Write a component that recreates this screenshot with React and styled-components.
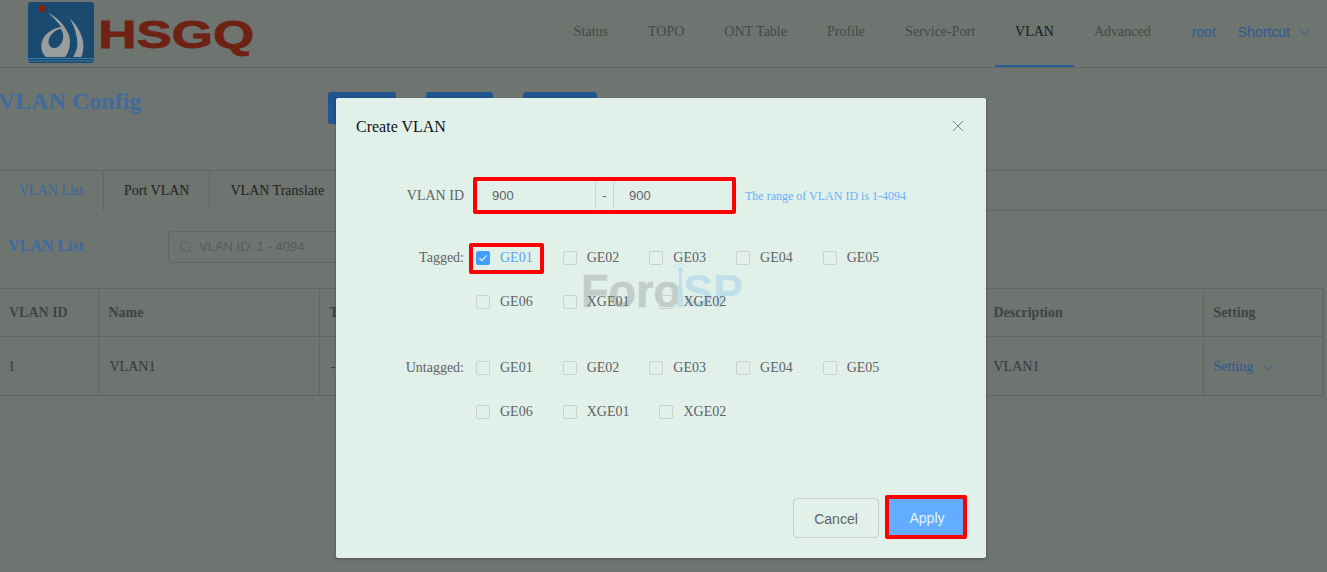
import React from "react";
import styled, { createGlobalStyle } from "styled-components";

const serif = `"Liberation Serif", "Times New Roman", serif`;
const sans = `"Liberation Sans", Arial, sans-serif`;
const line = "#5f6664";

const Global = createGlobalStyle`
  html, body { margin: 0; padding: 0; background: #6e7470; }
  body { font-family: ${serif}; font-size: 14px; overflow: hidden; }
  #root { width: 1327px; height: 572px; overflow: hidden; position: relative; }
`;

const Page = styled.div`
  width: 1327px;
  height: 572px;
  background: #6e7470;
  color: #464a4a;
`;

const Header = styled.header`
  display: flex;
  height: 67px;
  border-bottom: 1px solid ${line};
`;

const LogoWrap = styled.div`
  width: 260px;
  padding: 2px 0 0 28px;
  flex: none;
`;

const Nav = styled.nav`
  display: flex;
  margin-left: auto;
  height: 67px;
`;

const NavItem = styled.a`
  display: flex;
  align-items: center;
  height: 63px;
  padding: 0 20px 2px;
  color: ${(p) => (p.$active ? "#18191a" : "#444948")};
  border-bottom: 2px solid ${(p) => (p.$active ? "#2a5c99" : "transparent")};
`;

const UserMenu = styled.div`
  display: flex;
  align-items: center;
  font-family: ${sans};
  color: #2b5b97;
  height: 64px;
  margin-left: 21px;
  padding-right: 16px;
`;

const Shortcut = styled.span`
  display: flex;
  align-items: center;
  margin-left: 22px;
  gap: 9px;
`;

const TitleRow = styled.div`
  display: flex;
  height: 102px;
  align-items: flex-start;
`;

const Title = styled.h1`
  width: 328px;
  margin: 19px 0 0 -2px;
  padding: 0;
  font-size: 24px;
  line-height: 28px;
  font-weight: 700;
  color: #3f6b9e;
`;

const ActionBar = styled.div`
  display: flex;
  margin: 24px 0 0 2px;
`;

const Action = styled.div`
  width: ${(p) => p.$w}px;
  margin-right: ${(p) => p.$gap}px;
  height: 32px;
  border-radius: 3px;
  background: #20558f;
`;

const Tabs = styled.div`
  display: flex;
  height: 41px;
  box-sizing: border-box;
  border-top: 1px solid ${line};
  border-bottom: 1px solid ${line};
`;

const Tab = styled.div`
  display: flex;
  flex: none;
  align-items: center;
  height: 40px;
  box-sizing: border-box;
  padding: 0 20px;
  white-space: nowrap;
  border-right: 1px solid ${line};
  color: #1d1f1f;
  background: #6e7470;
`;

const ActiveTab = styled(Tab)`
  width: 104px;
  padding: 0 0 0 19px;
  color: #35669f;
`;

const ListBar = styled.div`
  display: flex;
  align-items: center;
  height: 77px;
  padding: 0 0 8px 8px;
  box-sizing: border-box;
`;

const ListTitle = styled.h2`
  width: 160px;
  margin: 0;
  font-size: 16px;
  font-weight: 700;
  color: #3a6ba3;
`;

const Search = styled.div`
  display: flex;
  align-items: center;
  width: 300px;
  height: 32px;
  box-sizing: border-box;
  padding-left: 10px;
  margin-top: 2px;
  border: 1px solid ${line};
  border-radius: 4px;
  gap: 6px;
  font-family: ${sans};
  font-size: 13px;
  color: #565c5b;
`;

const Table = styled.table`
  table-layout: fixed;
  width: 1323px;
  border-collapse: collapse;
`;

const Th = styled.th`
  height: 47px;
  padding: 0 10px;
  text-align: left;
  font-weight: 700;
  color: #3f4343;
  border: 1px solid ${line};
  &:first-child { border-left: none; padding-left: 9px; }
  &:nth-child(5) { padding-left: 11px; }
`;

const Td = styled.td`
  height: 59px;
  padding: 2px 10px 0 11px;
  box-sizing: border-box;
  color: #363938;
  border: 1px solid ${line};
  &:first-child { border-left: none; padding-left: 8px; }
  &:last-child { padding-left: 10px; }
`;

const SettingLink = styled.span`
  display: inline-flex;
  align-items: center;
  gap: 10px;
  color: #2b5b97;
`;

const Modal = styled.section`
  position: absolute;
  left: 336px;
  top: 98px;
  width: 650px;
  height: 460px;
  display: flex;
  flex-direction: column;
  background: #e1f0e9;
  border-radius: 2px;
  box-shadow: 0 1px 3px rgba(0, 0, 0, 0.3);
`;

const ModalHead = styled.div`
  display: flex;
  align-items: center;
  justify-content: space-between;
  height: 56px;
  box-sizing: border-box;
  padding: 2px 22px 0 20px;
  font-size: 16px;
  color: #111;
`;

const Close = styled.span`
  display: flex;
  margin-top: -2px;
  color: #7d8582;
`;

const ModalBody = styled.div`
  position: relative;
  padding: 23px 20px 0;
  flex: 1;
`;

const Row = styled.div`
  position: relative;
  display: flex;
  align-items: ${(p) => (p.$top ? "flex-start" : "center")};
  margin-bottom: ${(p) => p.$mb || 0}px;
`;

const FieldLabel = styled.label`
  width: 108px;
  flex: none;
  text-align: right;
  color: #606266;
  line-height: ${(p) => (p.$tall ? "44px" : "normal")};
`;

const RangeBox = styled.div`
  display: flex;
  align-items: stretch;
  width: 263px;
  height: 37px;
  box-sizing: border-box;
  margin-left: 9px;
  border: 4px solid #fe0000;
  border-radius: 2px;
  font-family: ${sans};
  font-size: 13px;
  color: #606266;
`;

const RangeInput = styled.div`
  flex: 1;
  display: flex;
  align-items: center;
  padding-left: 15px;
  border-style: solid;
  border-color: #ccd4d0;
  border-width: 0 ${(p) => (p.$second ? "0 0 1px" : "1px 0 0")};
  border-radius: 3px;
`;

const RangeSep = styled.span`
  width: 17px;
  flex: none;
  text-align: center;
  line-height: 29px;
`;

const Hint = styled.span`
  margin: 2px 0 0 9px;
  font-size: 12px;
  color: #66b1ff;
`;

const Ports = styled.div`
  display: flex;
  flex-wrap: wrap;
  width: 470px;
  margin-left: 12px;
`;

const Port = styled.label`
  position: relative;
  display: flex;
  align-items: center;
  height: 44px;
  margin-right: 30px;
  gap: 10px;
  color: ${(p) => (p.$checked ? "#56a6f7" : "#606266")};
  ${(p) =>
    p.$checked &&
    `&::after {
      content: "";
      position: absolute;
      left: -7px;
      right: -11px;
      top: 7px;
      bottom: 6px;
      border: 4px solid #fe0000;
      border-radius: 2px;
    }`}
`;

const Box = styled.span`
  display: flex;
  align-items: center;
  justify-content: center;
  width: 14px;
  height: 14px;
  box-sizing: border-box;
  border: 1px solid ${(p) => (p.$checked ? "#409eff" : "#c9d0cd")};
  border-radius: 2px;
  background: ${(p) => (p.$checked ? "#409eff" : "transparent")};
`;

const Watermark = styled.svg`
  position: absolute;
  left: 239px;
  top: 108px;
  pointer-events: none;
`;

const Footer = styled.div`
  display: flex;
  justify-content: flex-end;
  align-items: flex-start;
  gap: 6px;
  padding: 0 19px 19px 0;
  font-family: ${sans};
  font-size: 14px;
`;

const Cancel = styled.div`
  display: flex;
  align-items: center;
  justify-content: center;
  width: 86px;
  height: 40px;
  margin-top: 3px;
  padding-top: 1px;
  box-sizing: border-box;
  border: 1px solid #c8cfcb;
  border-radius: 4px;
  color: #606266;
`;

const Apply = styled.div`
  display: flex;
  align-items: center;
  justify-content: center;
  width: 82px;
  height: 44px;
  padding: 1px 0 0 2px;
  box-sizing: border-box;
  border: 4px solid #fe0000;
  border-radius: 2px;
  background: #62adff;
  color: #e4f1fb;
`;

const Logo = () => (
  <svg width="232" height="62" viewBox="0 0 232 62">
    <rect x="0" y="0" width="66" height="61" rx="3" fill="#1a4a70" />
    <circle cx="14" cy="6.5" r="3.7" fill="#7a2418" />
    <path
      fillRule="evenodd"
      fill="#9a9e9e"
      d="M20 10.7 C29 15 37 23 41 33 C43 41 42 49 37 55 L18 55 C13 51 12 43 15 37 C18 31 25 26 33 25 C30 20 25 15 20 10.7 Z M33 27 C26 28 20.5 34 20.5 40 C21 45.5 26 47.5 30 45 C35.5 41 37 33 33 27 Z"
    />
    <path fill="#9a9e9e" d="M41.7 16.3 C48 22 53 30 55 39 C56 45 55 51 53.3 55 L45 55 C48 50 50 45 49.3 40 C48.8 32 45.5 23 41.7 16.3 Z" />
    <path d="M0 56.5 H66 M0 59 H66" stroke="#3d7aa5" strokeWidth="1" />
    <text
      x="70.2"
      y="46"
      textLength="156"
      lengthAdjust="spacingAndGlyphs"
      fontFamily={sans}
      fontWeight="700"
      fontSize="38"
      fill="#6e2214"
      stroke="#6e2214"
      strokeWidth="0.8"
    >
      HSGQ
    </text>
  </svg>
);

const Chevron = ({ size = 12 }) => (
  <svg width={size} height={size} viewBox="0 0 12 12" fill="none" stroke="currentColor" strokeWidth="1">
    <path d="M1 3.5 L6 8.5 L11 3.5" />
  </svg>
);

const Check = () => (
  <svg width="10" height="10" viewBox="0 0 10 10" fill="none" stroke="#e6f2fb" strokeWidth="1.2">
    <path d="M1.5 5.2 L4 7.6 L8.6 2.4" />
  </svg>
);

const PortCheck = ({ name, checked }) => (
  <Port $checked={checked}>
    <Box $checked={checked}>{checked && <Check />}</Box>
    {name}
  </Port>
);

const ports = ["GE01", "GE02", "GE03", "GE04", "GE05", "GE06", "XGE01", "XGE02"];
const nav = ["Status", "TOPO", "ONT Table", "Profile", "Service-Port", "VLAN", "Advanced"];

export default function App() {
  return (
    <Page>
      <Global />
      <Header>
        <LogoWrap>
          <Logo />
        </LogoWrap>
        <Nav>
          {nav.map((n) => (
            <NavItem key={n} $active={n === "VLAN"}>
              {n}
            </NavItem>
          ))}
        </Nav>
        <UserMenu>
          root
          <Shortcut>
            Shortcut <Chevron />
          </Shortcut>
        </UserMenu>
      </Header>

      <TitleRow>
        <Title>VLAN Config</Title>
        <ActionBar>
          <Action $w={68} $gap={30} />
          <Action $w={67} $gap={30} />
          <Action $w={74} $gap={0} />
        </ActionBar>
      </TitleRow>

      <Tabs>
        <ActiveTab>VLAN List</ActiveTab>
        <Tab>Port VLAN</Tab>
        <Tab>VLAN Translate</Tab>
      </Tabs>

      <ListBar>
        <ListTitle>VLAN List</ListTitle>
        <Search>
          <svg width="14" height="14" viewBox="0 0 14 14" fill="none" stroke="#565c5b" strokeWidth="1">
            <circle cx="6.5" cy="6.5" r="5" />
            <path d="M10.2 10.2 L13 13" />
          </svg>
          VLAN ID: 1 - 4094
        </Search>
      </ListBar>

      <Table>
        <colgroup>
          <col style={{ width: 98 }} />
          <col style={{ width: 221 }} />
          <col style={{ width: 332 }} />
          <col style={{ width: 331 }} />
          <col style={{ width: 221 }} />
          <col style={{ width: 120 }} />
        </colgroup>
        <thead>
          <tr>
            <Th>VLAN ID</Th>
            <Th>Name</Th>
            <Th>Tagged</Th>
            <Th>Untagged</Th>
            <Th>Description</Th>
            <Th>Setting</Th>
          </tr>
        </thead>
        <tbody>
          <tr>
            <Td>1</Td>
            <Td>VLAN1</Td>
            <Td>-</Td>
            <Td>-</Td>
            <Td>VLAN1</Td>
            <Td>
              <SettingLink>
                Setting <Chevron size={11} />
              </SettingLink>
            </Td>
          </tr>
        </tbody>
      </Table>

      <Modal>
        <ModalHead>
          Create VLAN
          <Close>
            <svg width="12" height="12" viewBox="0 0 12 12" stroke="currentColor" strokeWidth="1">
              <path d="M1 1 L11 11 M11 1 L1 11" />
            </svg>
          </Close>
        </ModalHead>
        <ModalBody>
          <Watermark width="175" height="55" viewBox="0 0 175 55">
            <text x="6" y="45" textLength="100" lengthAdjust="spacingAndGlyphs" fontFamily={sans} fontWeight="700" fontSize="46" fill="#c1cdc8" stroke="#c1cdc8" strokeWidth="0.5">
              Foro
            </text>
            <text x="108" y="45" textLength="60" lengthAdjust="spacingAndGlyphs" fontFamily={sans} fontWeight="700" fontSize="46" fill="#bfe0ea">
              SP
            </text>
            <path d="M104.5 10 H106.5 L108.5 45 H102 Z" fill="#bfe0ea" />
            <circle cx="105.5" cy="7.5" r="2.6" fill="#bfe0ea" />
            <path d="M99 5 L105.5 1 L112 5" fill="none" stroke="#bfe0ea" strokeWidth="1" />
          </Watermark>
          <Row $mb={22}>
            <FieldLabel>VLAN ID</FieldLabel>
            <RangeBox>
              <RangeInput>900</RangeInput>
              <RangeSep>-</RangeSep>
              <RangeInput $second>900</RangeInput>
            </RangeBox>
            <Hint>The range of VLAN ID is 1-4094</Hint>
          </Row>
          <Row $top $mb={22}>
            <FieldLabel $tall>Tagged:</FieldLabel>
            <Ports>
              {ports.map((p) => (
                <PortCheck key={p} name={p} checked={p === "GE01"} />
              ))}
            </Ports>
          </Row>
          <Row $top>
            <FieldLabel $tall>Untagged:</FieldLabel>
            <Ports>
              {ports.map((p) => (
                <PortCheck key={p} name={p} />
              ))}
            </Ports>
          </Row>
        </ModalBody>
        <Footer>
          <Cancel>Cancel</Cancel>
          <Apply>Apply</Apply>
        </Footer>
      </Modal>
    </Page>
  );
}
